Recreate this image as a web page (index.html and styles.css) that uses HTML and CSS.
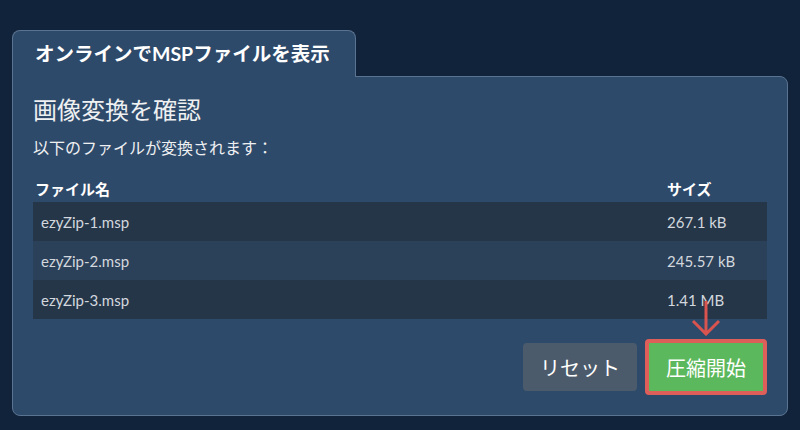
FILE: index.html
```html
<!DOCTYPE html>
<html lang="ja">
<head>
<meta charset="utf-8">
<title>MSP</title>
<link rel="stylesheet" href="styles.css">
</head>
<body>
<div class="wrap">
  <div class="tab">オンラインでMSPファイルを表示</div>
  <div class="panel">
    <h1 class="title">画像変換を確認</h1>
    <p class="sub">以下のファイルが変換されます：</p>
    <table class="files">
      <thead>
        <tr><th>ファイル名</th><th class="size">サイズ</th></tr>
      </thead>
      <tbody>
        <tr><td>ezyZip-1.msp</td><td class="size">267.1 kB</td></tr>
        <tr><td>ezyZip-2.msp</td><td class="size">245.57 kB</td></tr>
        <tr><td>ezyZip-3.msp</td><td class="size">1.41 MB</td></tr>
      </tbody>
    </table>
    <div class="actions">
      <button class="btn reset">リセット</button>
      <div class="start-wrap">
        <svg class="arrow" width="30" height="36" viewBox="0 0 30 36">
          <path d="M15 1 V34 M2 21 L15 34 L28 21" fill="none" stroke="#d9534f" stroke-width="3"/>
        </svg>
        <button class="btn start">圧縮開始</button>
      </div>
    </div>
  </div>
</div>
</body>
</html>
```

FILE: styles.css
```css
html, body {
  margin: 0;
  padding: 0;
  background: #11233a;
  font-family: "Lato", "Noto Sans CJK JP", sans-serif;
}
.wrap {
  padding: 30px 12px 0 12px;
}
.tab {
  position: relative;
  z-index: 1;
  box-sizing: border-box;
  width: 344px;
  height: 47px;
  margin-bottom: -1px;
  background: #2e4a6a;
  border: 1px solid #5a7390;
  border-bottom: none;
  border-radius: 8px 8px 0 0;
  color: #ffffff;
  font-weight: 700;
  font-size: 19.5px;
  line-height: 46px;
  padding-left: 22px;
  white-space: nowrap;
}
.panel {
  box-sizing: border-box;
  height: 340px;
  background: #2e4a6a;
  border: 1px solid #5a7390;
  border-radius: 0 8px 8px 8px;
  padding: 17px 20px 0 20px;
}
.title {
  margin: 0;
  font-size: 24px;
  font-weight: 400;
  line-height: 32px;
  color: #eef0f2;
}
.sub {
  margin: 11px 0 0 0;
  font-size: 16px;
  line-height: 22px;
  color: #eef0f2;
}
.files {
  width: 100%;
  margin-top: 15px;
  border-collapse: collapse;
}
.files th {
  text-align: left;
  font-size: 15px;
  font-weight: 700;
  color: #ffffff;
  height: 28px;
  padding: 0 2px;
  vertical-align: middle;
}
.files td {
  height: 39px;
  padding: 0 8px;
  font-size: 15px;
  color: #d3d8de;
  vertical-align: middle;
}
.files th.size, .files td.size {
  width: 92px;
  padding-left: 8px;
}
.files tbody tr:nth-child(odd) {
  background: #253649;
}
.files tbody tr:nth-child(even) {
  background: #2b4059;
}
.actions {
  display: flex;
  justify-content: flex-end;
  align-items: center;
  gap: 8px;
  margin-top: 20px;
}
.btn {
  font-family: "Lato", "Noto Sans CJK JP", sans-serif;
  font-size: 20px;
  color: #ffffff;
  border: none;
  cursor: pointer;
  padding: 0;
}
.reset {
  width: 114px;
  height: 48px;
  background: #4c5b6b;
  border-radius: 4px;
}
.start-wrap {
  position: relative;
}
.arrow {
  position: absolute;
  left: 46px;
  top: -39px;
}
.start {
  display: block;
  box-sizing: border-box;
  width: 122px;
  height: 56px;
  background: #5cb85c;
  border: 4px solid #de5f5a;
  border-radius: 4px;
}
```
